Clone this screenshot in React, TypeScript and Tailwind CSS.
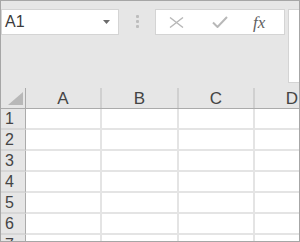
import React from "react";

const columns = [
  { label: "A", width: "w-[76px]" },
  { label: "B", width: "w-[77px]" },
  { label: "C", width: "w-[76px]" },
  { label: "D", width: "w-[76px]" },
];

const rows = [1, 2, 3, 4, 5, 6, 7];

export default function App() {
  return (
    <div className="relative h-[242px] w-[300px] overflow-hidden border border-[#a6a6a6] bg-[#e6e6e6] font-['Liberation_Sans',Arial,sans-serif] text-[#333]">
      {/* formula bar */}
      <div className="flex h-[87px] items-start pt-[8px]">
        <div className="flex h-[26px] w-[118px] shrink-0 items-center justify-between border border-[#d4d4d4] bg-white pl-[3px] pr-[8px]">
          <span className="text-[16px] leading-none text-[#3b3b3b]">A1</span>
          <svg width="7" height="4" viewBox="0 0 7 4">
            <path d="M0 0h7L3.5 4z" fill="#6b6b6b" />
          </svg>
        </div>
        <div className="flex w-[36px] shrink-0 flex-col items-center gap-[2px] pt-[6px]">
          <span className="h-[3px] w-[3px] rounded-[1px] bg-[#bdbdbd]" />
          <span className="h-[3px] w-[3px] rounded-[1px] bg-[#bdbdbd]" />
          <span className="h-[3px] w-[3px] rounded-[1px] bg-[#bdbdbd]" />
        </div>
        <div className="flex h-[26px] w-[130px] shrink-0 items-center border border-[#d4d4d4] bg-white">
          <svg className="ml-[13px]" width="15" height="11" viewBox="0 0 15 11">
            <path d="M1 0.5 14 10.5M14 0.5 1 10.5" stroke="#b8b8b8" strokeWidth="1.4" fill="none" />
          </svg>
          <svg className="ml-[28px]" width="16" height="12" viewBox="0 0 16 12">
            <path d="M1 6.5 5.5 11 15 1" stroke="#b8b8b8" strokeWidth="2" fill="none" />
          </svg>
          <span className="ml-[25px] font-['Liberation_Serif','Times_New_Roman',serif] text-[17px] italic leading-none text-[#5f5f5f]">
            fx
          </span>
        </div>
        <div className="ml-[3px] h-[74px] flex-1 border border-r-0 border-[#d4d4d4] bg-white" />
      </div>

      {/* grid */}
      <div className="flex h-[21px] border-b border-[#ababab]">
        <div className="relative w-[25px] shrink-0 border-r border-[#ababab]">
          <svg className="absolute bottom-[3px] right-[2px]" width="15" height="13" viewBox="0 0 15 13">
            <path d="M15 0V13H0z" fill="#b8b8b8" />
          </svg>
        </div>
        {columns.map((c) => (
          <div
            key={c.label}
            className={`${c.width} flex shrink-0 items-center justify-center border-r-2 border-[#d0d0d0] pt-[1px] text-[17px] leading-none text-[#444]`}
          >
            {c.label}
          </div>
        ))}
      </div>
      {rows.map((r) => (
        <div key={r} className="flex h-[21px]">
          <div className="flex w-[25px] shrink-0 items-center border-r border-b-2 border-[#ababab] border-b-[#d6d6d6] pl-[4px] text-[16px] leading-none text-[#444]">
            {r}
          </div>
          {columns.map((c) => (
            <div key={c.label} className={`${c.width} shrink-0 border-r-2 border-b-2 border-[#e4e4e4] bg-white`} />
          ))}
        </div>
      ))}
    </div>
  );
}
